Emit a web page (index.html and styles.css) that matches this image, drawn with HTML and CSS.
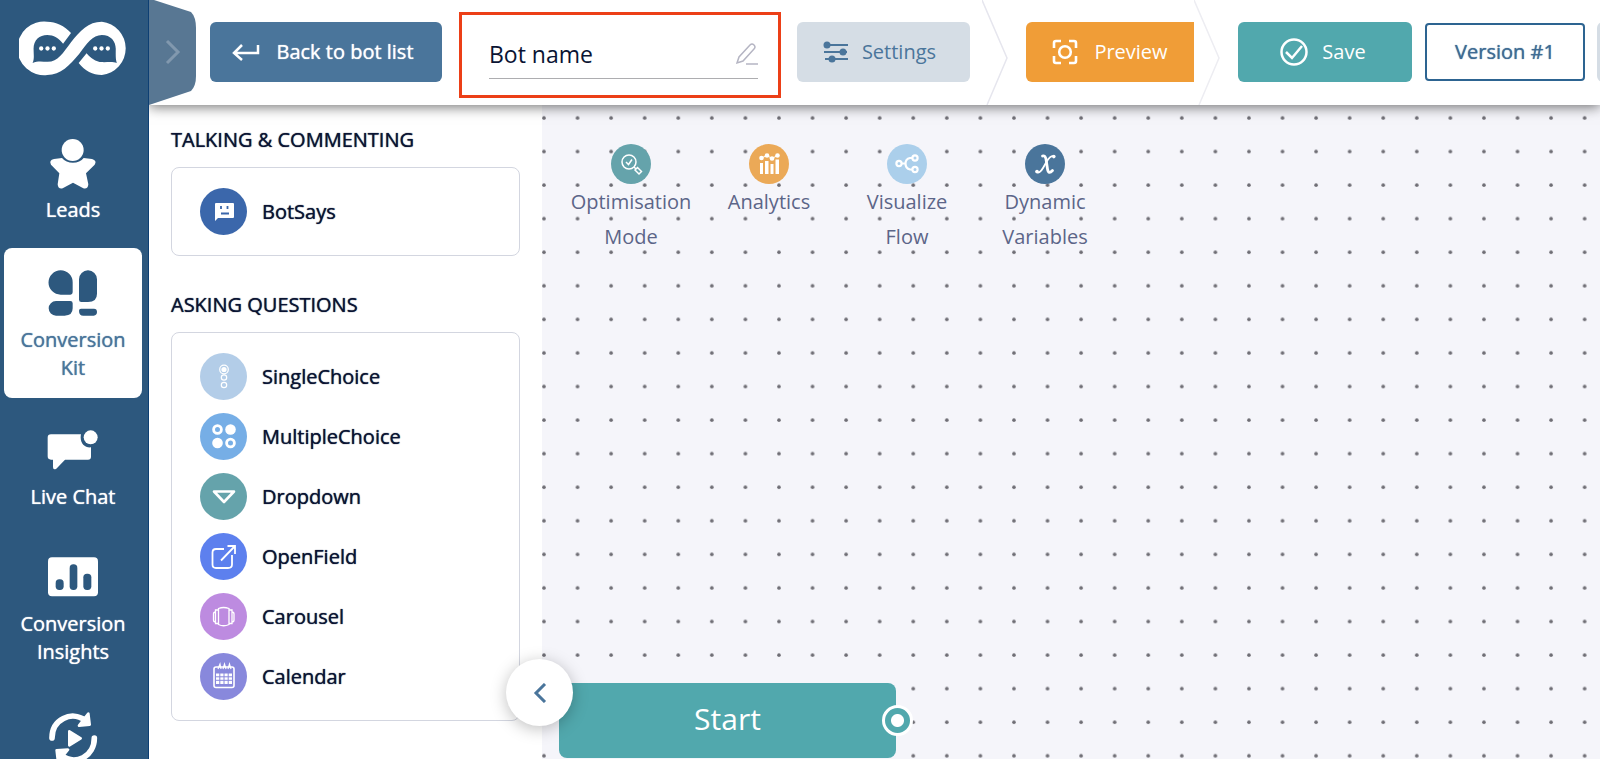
FILE: index.html
```html
<!DOCTYPE html>
<html lang="en">
<head>
<meta charset="utf-8">
<title>Bot builder</title>
<link rel="stylesheet" href="styles.css">
</head>
<body>
<div class="app">
  <nav class="sidebar" aria-label="Main">
    <a class="logo" href="#" aria-label="Home">
      <svg width="112" height="57" viewBox="54 58 336 172"><path fill="#fff" d="M210 97C190 75 165 63 138 63A81 81 0 1 0 138 224C180 224 205 195 235 160C258 128 275 103 303 103C330 103 345 122 345 145C345 162 344 175 348 188C335 182 320 186 303 185C285 184 268 172 257 158L233 188C252 212 275 224 303 224A81 81 0 0 0 303 63C262 63 238 90 210 125C185 158 170 185 138 184C125 184 110 180 94 188C100 175 97 160 97 145C97 118 115 103 138 103C158 103 173 112 186 130Z"/><g fill="#fff"><circle cx="120" cy="144" r="6.500"/><circle cx="139" cy="144" r="6.500"/><circle cx="158" cy="144" r="6.500"/><circle cx="283" cy="144" r="6.500"/><circle cx="302" cy="144" r="6.500"/><circle cx="321" cy="144" r="6.500"/></g></svg>
    </a>
    <a class="nav-item" href="#">
      <svg width="50" height="52" viewBox="144 54 150 156" fill="#fff"><circle cx="218" cy="90" r="33"/><path d="M162 117L186 114C200 133 238 133 251 114L276 117Q292 122 284 134L258 160L265 193Q264 208 250 205L219 188L188 205Q174 208 173 193L178 160L153 134Q146 120 162 117Z"/></svg>
      <span>Leads</span>
    </a>
    <a class="nav-item active" href="#" aria-current="page">
      <svg width="50" height="46" viewBox="144 451 150 138" fill="#2d587e"><path d="M182 452A36 36 0 0 1 218 488V518Q218 525 211 525H182A36 36 0 0 1 182 452ZM264 452A27 27 0 0 1 291 479V522Q291 547 264 547H244Q237 547 237 540V479A27 27 0 0 1 264 452ZM168 544H211Q218 544 218 551V566Q218 588 194 588H168A22 22 0 0 1 168 544ZM243 567H282Q291 567 291 577T281 588H250Q237 588 237 573Q237 567 243 567Z"/></svg>
      <span>Conversion Kit</span>
    </a>
    <a class="nav-item" href="#">
      <svg width="52" height="40" viewBox="143 60 156 120" fill="#fff"><path d="M155 73H245C240 96 254 114 275 112V140Q275 149 266 149H197L171 176Q161 181 161 171V149H155Q145 149 145 139V83Q145 73 155 73Z"/><circle cx="274" cy="82" r="21"/></svg>
      <span>Live Chat</span>
    </a>
    <a class="nav-item" href="#">
      <svg width="50" height="40" viewBox="145 446 150 120"><rect x="145" y="447" width="150" height="117" rx="12" fill="#fff"/><g fill="#2d587e"><rect x="168" y="513" width="24" height="32" rx="11"/><rect x="210" y="468" width="23" height="77" rx="11"/><rect x="251" y="496" width="24" height="49" rx="11"/></g></svg>
      <span>Conversion Insights</span>
    </a>
    <a class="nav-item" href="#" aria-label="Replay">
      <svg width="50" height="54" viewBox="144 900 150 162"><g fill="none" stroke="#fff" stroke-width="17" stroke-linecap="round"><path d="M156 978C156 922 214 895 256 925M283 978C283 1034 226 1062 183 1030"/></g><g fill="#fff" stroke="#fff" stroke-width="8" stroke-linejoin="round"><path d="M265 905L269 938L237 941ZM204 1013L170 1015L174 1050Z"/><path d="M208 958L242 979L208 1000Z"/></g></svg>
    </a>
  </nav>

  <div class="workspace">
    <header class="topbar">
      <button class="expander" type="button" aria-label="Expand menu">
        <svg width="48" height="105" viewBox="0 0 48 105"><path d="M0 0H5L42 12Q47 17 47 28V76Q47 86 42 91L0 105Z" fill="#587793"/><path d="M18 41L29 52L18 63" fill="none" stroke="#8198ae" stroke-width="3"/></svg>
      </button>
      <button class="btn back" type="button">
        <svg width="28" height="18" viewBox="0 0 28 18" fill="none" stroke="#fff" stroke-width="2.500"><path d="M26 2V10H2M10 2L2 10L10 17"/></svg>
        Back to bot list
      </button>
      <div class="name-box">
        <label class="name-field">
          <input type="text" value="Bot name" aria-label="Bot name">
          <svg width="22" height="22" viewBox="0 0 22 22" fill="none" stroke="#b5b5c3" stroke-width="1.500"><path d="M1 20L3 14L14 2Q16 0 18 2Q20 4 18 6L7 18ZM10 21H22"/></svg>
        </label>
      </div>
      <button class="btn settings" type="button">
        <svg width="26" height="22" viewBox="0 0 26 22"><path d="M3 4H25M1 11H24M2 18H25" stroke="#4a759b" stroke-width="2"/><g fill="#4a759b"><circle cx="4" cy="4" r="3.500"/><circle cx="20" cy="11" r="3.500"/><circle cx="9" cy="18" r="3.500"/></g></svg>
        Settings
      </button>
      <svg class="divider" width="27" height="105" viewBox="0 0 27 105" fill="none" stroke="#e6e6ee" stroke-width="1.500"><path d="M0 0L25 58L5 105"/></svg>
      <button class="btn preview" type="button">
        <svg width="26" height="26" viewBox="0 0 26 26" fill="none" stroke="#fff" stroke-width="2.600"><path d="M2 9V4Q2 2 4 2H9M17 2H22Q24 2 24 4V9M24 17V22Q24 24 22 24H17M9 24H4Q2 24 2 22V17"/><circle cx="13" cy="13" r="5.800"/></svg>
        Preview
      </button>
      <svg class="divider" width="27" height="105" viewBox="0 0 27 105" fill="none" stroke="#ededf2" stroke-width="1.500"><path d="M0 0L25 58L5 105"/></svg>
      <button class="btn save" type="button">
        <svg width="28" height="28" viewBox="0 0 28 28" fill="none" stroke="#fff" stroke-width="2.500"><circle cx="14" cy="14" r="12.500"/><path d="M6 14L12 20L22 8"/></svg>
        Save
      </button>
      <button class="btn version" type="button">Version #1</button>
      <button class="btn more" type="button" aria-label="More"></button>
    </header>

    <main class="builder">
      <aside class="panel">
        <h2>TALKING &amp; COMMENTING</h2>
        <div class="blocks">
          <button class="block" type="button">
            <svg width="47" height="47" viewBox="0 0 47 47"><circle cx="23.500" cy="23.500" r="23.500" fill="#3b67ab"/><path d="M16 15H33Q34 15 34 16V29Q34 30 33 30H18L15 33V16Q15 15 16 15Z" fill="#fff"/><path d="M21 18V21M27.500 18V21M21 25.500H29" stroke="#3b67ab" stroke-width="1.800"/></svg>
            BotSays
          </button>
        </div>
        <h2>ASKING QUESTIONS</h2>
        <div class="blocks">
          <button class="block" type="button">
            <svg width="47" height="47" viewBox="0 0 47 47"><circle cx="23.500" cy="23.500" r="23.500" fill="#b3cde8"/><g fill="none" stroke="#fff" stroke-width="1.200"><circle cx="24" cy="16.500" r="4.300"/><circle cx="24" cy="24.500" r="2.700"/><circle cx="24" cy="32" r="2.700"/></g><circle cx="24" cy="16.500" r="2.600" fill="#fff"/></svg>
            SingleChoice
          </button>
          <button class="block" type="button">
            <svg width="47" height="47" viewBox="0 0 47 47"><circle cx="23.500" cy="23.500" r="23.500" fill="#76aee6"/><g fill="none" stroke="#fff" stroke-width="2.800"><circle cx="17.500" cy="16.500" r="3.900"/><circle cx="30.500" cy="30" r="3.900"/></g><g fill="#fff"><circle cx="30.500" cy="16.500" r="5.300"/><circle cx="17.500" cy="30" r="5.300"/></g></svg>
            MultipleChoice
          </button>
          <button class="block" type="button">
            <svg width="47" height="47" viewBox="0 0 47 47"><circle cx="23.500" cy="23.500" r="23.500" fill="#65a3ab"/><path d="M14 18.500H34L24 29Z" fill="none" stroke="#fff" stroke-width="2.600" stroke-linejoin="round"/></svg>
            Dropdown
          </button>
          <button class="block" type="button">
            <svg width="47" height="47" viewBox="0 0 47 47"><circle cx="23.500" cy="23.500" r="23.500" fill="#5d80ee"/><path d="M24 16H16Q12.500 16 12.500 19.500V31.500Q12.500 35 16 35H28Q32 35 32 31.500V22M21 27.500L35 13M27.500 13H35V21" fill="none" stroke="#fff" stroke-width="1.800"/></svg>
            OpenField
          </button>
          <button class="block" type="button">
            <svg width="47" height="47" viewBox="0 0 47 47"><circle cx="23.500" cy="23.500" r="23.500" fill="#bd8be0"/><path d="M18.500 15.500Q23.500 13.500 29 15.500V31.500Q23.500 34 18.500 31.500ZM18.500 17H15.500V30.500H18.500M15.500 19Q13.500 19 13.500 21V27Q13.500 29 15.500 29M29 17H32V30.500H29M32 19Q34 19 34 21V27Q34 29 32 29" fill="none" stroke="#fff" stroke-width="1.300"/></svg>
            Carousel
          </button>
          <button class="block" type="button">
            <svg width="47" height="47" viewBox="0 0 47 47"><circle cx="23.500" cy="23.500" r="23.500" fill="#8888dc"/><rect x="14" y="14" width="20" height="20.500" rx="2" fill="none" stroke="#fff" stroke-width="1.600"/><path d="M18 16L20 11L21 16M23 16L24.500 11L26 16M28 16L29.500 11L31 16" fill="none" stroke="#fff" stroke-width="1.200"/><path d="M16 20.500H32V31H16Z" fill="#fff"/><path d="M16 23.800H32M16 27.300H32M19.800 20V31.500M24 20V31.500M28.200 20V31.500" stroke="#8888dc"/></svg>
            Calendar
          </button>
        </div>
      </aside>

      <section class="canvas" aria-label="Flow canvas">
        <svg class="grid" width="100%" height="100%"><defs><pattern id="dots" width="33.570" height="33.570" patternUnits="userSpaceOnUse"><circle cx="2" cy="13" r="1.800" fill="#6e6d74"/></pattern></defs><rect width="100%" height="100%" fill="url(#dots)"/></svg>
        <div class="tools">
          <button class="tool" type="button">
            <svg width="40" height="40" viewBox="0 0 40 40"><circle cx="20" cy="20" r="20" fill="#65a3ab"/><g fill="none" stroke="#fff" stroke-width="1.500"><circle cx="18" cy="18" r="7"/><path d="M15 18L17.500 20.500L21 15.500M23 23L25 25M24 26L26.500 23.500L30.500 27.500L28 30Z"/></g></svg>
            Optimisation Mode
          </button>
          <button class="tool" type="button">
            <svg width="40" height="40" viewBox="0 0 40 40"><circle cx="20" cy="20" r="20" fill="#eba957"/><g fill="#fff"><path d="M11 19H14V30H11ZM16 17H19.500V30H16ZM21.500 20H24.500V30H21.500ZM26.500 15.500H30V30H26.500Z"/><circle cx="12.500" cy="14" r="2.300"/><circle cx="18" cy="11.500" r="2.300"/><circle cx="23" cy="14.500" r="2.300"/><circle cx="28.500" cy="11.500" r="2.300"/></g><path d="M12.500 14L18 11.500L23 14.500L28.500 11.500" fill="none" stroke="#fff"/></svg>
            Analytics
          </button>
          <button class="tool" type="button">
            <svg width="40" height="40" viewBox="0 0 40 40"><circle cx="20" cy="20" r="20" fill="#abcfeb"/><g fill="none" stroke="#fff" stroke-width="2.200"><circle cx="12" cy="19.500" r="2.600"/><circle cx="28" cy="14" r="2.600"/><circle cx="28" cy="25.500" r="2.600"/><path d="M14.500 19.500H18.500M25.500 14H23Q18.500 15 18.500 19.500Q18.500 24.500 23 25.500H25.500"/></g></svg>
            Visualize Flow
          </button>
          <button class="tool" type="button">
            <svg width="40" height="40" viewBox="0 0 40 40"><circle cx="20" cy="20" r="20" fill="#4a759b"/><g fill="none" stroke="#fff" stroke-linecap="round"><path d="M17.500 12Q20 11 21 15L22.500 25Q23.500 31 27.500 26.500" stroke-width="2.800"/><path d="M29 12.500Q26 11 22 17L18 24Q14.500 30 11.500 28" stroke-width="1.800"/></g><circle cx="28.800" cy="12.600" r="1.800" fill="#fff"/><circle cx="12" cy="27.600" r="1.800" fill="#fff"/></svg>
            Dynamic Variables
          </button>
        </div>
        <div class="node">Start<span class="port"></span></div>
      </section>
      <button class="collapse" type="button" aria-label="Collapse panel">
        <svg width="14" height="20" viewBox="0 0 14 20" fill="none" stroke="#4a759b" stroke-width="3"><path d="M12 1L3 10L12 19"/></svg>
      </button>
    </main>
  </div>
</div>
</body>
</html>
```
FILE: styles.css
```css
* { box-sizing: border-box; }

body {
  margin: 0;
  height: 100vh;
  overflow: hidden;
  font-family: "Open Sans", "Noto Sans", sans-serif;
  font-size: 20px;
  color: #0a1433;
  background: #fff;
}

button {
  border: 0;
  margin: 0;
  padding: 0;
  background: none;
  font: inherit;
  color: inherit;
  cursor: pointer;
}

svg { display: block; flex: none; }

.app { display: flex; height: 100%; }

.sidebar {
  flex: none;
  width: 149px;
  background: #2d587e;
  border-right: 1px solid #0d3f73;
  display: flex;
  flex-direction: column;
  align-items: center;
  overflow: hidden;
  z-index: 3;
}

.logo { padding: 20px 0 53px 2px; }

.nav-item {
  flex: none;
  width: 138px;
  margin: 0 6px 10px 4px;
  padding: 8px 8px 14px;
  display: flex;
  flex-direction: column;
  align-items: center;
  gap: 6px;
  border-radius: 8px;
  color: #fff;
  line-height: 28px;
  text-align: center;
  text-decoration: none;
  text-shadow: 0 0 1px currentColor;
}

.nav-item.active {
  background: #fff;
  color: #4a759b;
  padding-top: 22px;
  padding-bottom: 16px;
  gap: 10px;
  margin-bottom: 24px;
}

.nav-item.active ~ .nav-item { gap: 13px; padding-bottom: 28px; }

.workspace {
  flex: 1;
  min-width: 0;
  display: flex;
  flex-direction: column;
}

.topbar {
  flex: none;
  display: flex;
  align-items: center;
  height: 105px;
  padding-bottom: 2px;
  background: #fff;
  box-shadow: 0 2px 12px rgba(0, 0, 0, 0.55);
  z-index: 2;
}

.expander, .divider { align-self: flex-start; }

.btn {
  flex: none;
  height: 60px;
  display: flex;
  align-items: center;
  justify-content: center;
  gap: 16px;
  border-radius: 6px;
  color: #fff;
  white-space: nowrap;
}

.back {
  width: 232px;
  margin-left: 13px;
  padding-right: 6px;
  background: #4a759b;
  text-shadow: 0 0 1px currentColor;
}

.name-box {
  flex: none;
  width: 322px;
  height: 86px;
  margin: 6px 16px 0 17px;
  padding: 20px 20px 16px 27px;
  border: 3px solid #ec3f17;
}

.name-field {
  display: flex;
  align-items: center;
  height: 100%;
  padding-bottom: 4px;
  border-bottom: 1px solid #adadb0;
}

.name-field input {
  flex: 1;
  min-width: 0;
  border: 0;
  padding: 0;
  outline: 0;
  background: none;
  font: inherit;
  font-size: 23px;
  color: inherit;
}

.settings { width: 173px; gap: 13px; padding-right: 8px; background: #d5dde5; color: #4a759b; }
.divider { margin-left: 12px; }
.preview { width: 168px; margin-left: 17px; background: #f09d37; border-radius: 6px 0 0 6px; }
.preview + .divider { margin-left: 0; }
.save { width: 174px; margin-left: 17px; padding-right: 4px; gap: 14px; background: #51a8ad; }

.version {
  width: 160px;
  height: 58px;
  margin-left: 13px;
  background: #fff;
  border: 2px solid #2d6491;
  border-radius: 4px;
  color: #3f6c94;
  text-shadow: 0 0 1px currentColor;
}

.more { width: 60px; margin-left: 12px; background: #d5dde5; }

.builder {
  position: relative;
  flex: 1;
  min-height: 0;
  display: flex;
}

.panel {
  flex: none;
  width: 393px;
  padding: 20px 22px;
  overflow: hidden;
  text-shadow: 0 0 1px currentColor;
}

.panel h2 {
  margin: 0 0 12px;
  font-size: 20px;
  line-height: 30px;
  font-weight: 400;
}

.blocks {
  display: flex;
  flex-direction: column;
  gap: 13px;
  margin-bottom: 34px;
  padding: 20px 28px;
  border: 1px solid #d3d6e0;
  border-radius: 8px;
}

.block {
  display: flex;
  align-items: center;
  gap: 15px;
  text-shadow: inherit;
}

.canvas {
  position: relative;
  flex: 1;
  min-width: 0;
  overflow: hidden;
  background: #f5f5fa;
}

.grid { position: absolute; inset: 0; }

.tools {
  position: relative;
  display: flex;
  align-items: flex-start;
  padding: 39px 20px;
}

.tool {
  width: 138px;
  padding: 0 8px;
  display: flex;
  flex-direction: column;
  align-items: center;
  color: #5c6588;
  line-height: 35px;
}

.node {
  position: absolute;
  left: 17px;
  top: 578px;
  width: 337px;
  height: 75px;
  padding-bottom: 4px;
  display: flex;
  align-items: center;
  justify-content: center;
  border-radius: 8px;
  background: #51a8ad;
  color: #fff;
  font-size: 30px;
}

.port {
  position: absolute;
  right: -17px;
  top: 22px;
  width: 31px;
  height: 31px;
  border: 3px solid #fff;
  border-radius: 50%;
  background: radial-gradient(circle, #fff 6px, #51a8ad 7px);
}

.collapse {
  position: absolute;
  left: 357px;
  top: 554px;
  width: 67px;
  height: 67px;
  display: grid;
  place-items: center;
  border-radius: 50%;
  background: #fff;
  box-shadow: 0 3px 16px rgba(0, 0, 0, 0.25);
}
```
